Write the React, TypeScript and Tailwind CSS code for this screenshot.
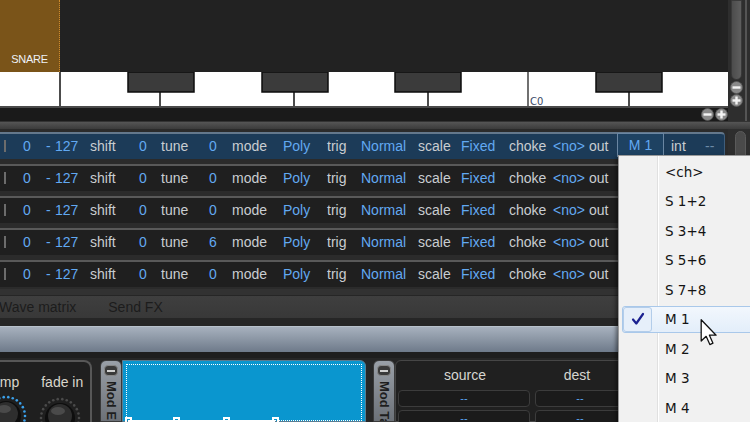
import React from 'react';

const tunes = ['0', '0', '0', '6', '0'];

const LABEL = 'text-[#c9cdd1]';
const VALUE = 'text-[#62a9f2]';

const cells = [
  { t: '0', w: 'w-[23px]', c: VALUE },
  { t: '-', w: 'w-[9px]', c: VALUE },
  { t: '127', w: 'w-[35px]', c: VALUE },
  { t: 'shift', w: 'w-[49px]', c: LABEL },
  { t: '0', w: 'w-[22px]', c: VALUE },
  { t: 'tune', w: 'w-[48px]', c: LABEL },
  { t: 'TUNE', w: 'w-[23px]', c: VALUE },
  { t: 'mode', w: 'w-[51px]', c: LABEL },
  { t: 'Poly', w: 'w-[44px]', c: VALUE },
  { t: 'trig', w: 'w-[34px]', c: LABEL },
  { t: 'Normal', w: 'w-[57px]', c: VALUE },
  { t: 'scale', w: 'w-[43px]', c: LABEL },
  { t: 'Fixed', w: 'w-[48px]', c: VALUE },
  { t: 'choke', w: 'w-[44px]', c: LABEL },
  { t: '<no>', w: 'w-[36px]', c: VALUE },
  { t: 'out', w: 'w-[28px]', c: LABEL },
];

const menu = ['<ch>', 'S 1+2', 'S 3+4', 'S 5+6', 'S 7+8', 'M 1', 'M 2', 'M 3', 'M 4'];

function Keyboard() {
  const blacks = [128, 262, 395, 596];
  const shortLines = [160, 294, 428, 629];
  return (
    <svg width="728" height="34" viewBox="0 0 728 34" className="block">
      <rect x="0" y="0" width="728" height="34" fill="#ffffff" />
      <line x1="60" y1="0" x2="60" y2="34" stroke="#111" strokeWidth="1.5" />
      <line x1="528" y1="0" x2="528" y2="34" stroke="#111" strokeWidth="1.2" />
      {shortLines.map((x) => (
        <line key={x} x1={x} y1="20" x2={x} y2="34" stroke="#111" strokeWidth="1.5" />
      ))}
      {blacks.map((x) => (
        <rect key={x} x={x} y="0" width="66" height="20" fill="#3b3b3b" stroke="#0c0c0c" strokeWidth="1.5" />
      ))}
      <text x="530" y="33" fontSize="10" fill="#3a4a66" fontFamily="'DejaVu Sans', sans-serif">
        C0
      </text>
    </svg>
  );
}

function RoundBtn({ plus }: { plus?: boolean }) {
  return (
    <svg width="13" height="13" viewBox="0 0 13 13" className="block">
      <circle cx="6.5" cy="6.5" r="6" fill="#8a8a8a" stroke="#5a5a5a" strokeWidth="0.8" />
      <rect x="2.5" y="5.3" width="8" height="2.4" fill="#f4f4f4" />
      {plus && <rect x="5.3" y="2.5" width="2.4" height="8" fill="#f4f4f4" />}
    </svg>
  );
}

function Row({ tune, active }: { tune: string; active?: boolean }) {
  return (
    <div className="h-[32px] flex items-center">
      <div
        className={
          active
            ? 'h-[27px] w-[725px] flex items-center bg-[#1c3b58] border-t-2 border-[#64788c] border-r border-r-[#3f5e7c] rounded-tr-sm'
            : 'h-[27px] w-[725px] flex items-center bg-[#1f1f1f] border-t-2 border-[#595959] border-r border-r-[#444]'
        }
      >
        <span className="w-[23px] pl-[4px] flex items-center shrink-0">
          <span className="block w-[2px] h-[12px] bg-[#6c6c6c]" />
        </span>
        {cells.map((c, i) => (
          <span key={i} className={`${c.w} ${c.c} shrink-0`}>
            {c.t === 'TUNE' ? tune : c.t}
          </span>
        ))}
        {active && (
          <>
            <span className="w-[47px] h-[24px] -mt-[2px] flex items-center justify-center border border-[#6a86a2] bg-[#1e4262] text-[#62a9f2] shrink-0">
              M 1
            </span>
            <span className={`w-[34px] ml-[7px] ${LABEL}`}>int</span>
            <span className="text-[#6d8aa6]">--</span>
          </>
        )}
      </div>
    </div>
  );
}

function Knob({ blue }: { blue?: boolean }) {
  const dots = Array.from({ length: 26 }, (_, i) => i);
  return (
    <svg width="44" height="44" viewBox="0 0 44 44" className="block">
      {dots.map((i) => {
        const a = (Math.PI * 2 * i) / 26;
        return (
          <circle
            key={i}
            cx={22 + Math.cos(a) * 19}
            cy={22 + Math.sin(a) * 19}
            r="1.3"
            fill={blue ? '#3aa0ea' : '#4a4a4a'}
          />
        );
      })}
      <circle cx="22" cy="22" r="15" fill="#0e0e0e" />
      <circle cx="22" cy="20" r="12" fill="#2e2e2e" />
      <ellipse cx="20" cy="15" rx="7" ry="4" fill="#4a4a4a" />
    </svg>
  );
}

function SideStrip({ label }: { label: string }) {
  return (
    <div className="w-[22px] h-full rounded-t-md bg-gradient-to-b from-[#9aa0a8] to-[#6c7178] border border-[#3a3a3a] flex flex-col items-center pt-[4px] overflow-hidden">
      <div className="w-[14px] h-[11px] shrink-0 rounded-sm bg-[#3a3a3a] border border-[#888] flex items-center justify-center">
        <div className="w-[8px] h-[2px] bg-[#cfcfcf]" />
      </div>
      <div className="mt-[5px] [writing-mode:vertical-rl] whitespace-nowrap text-[13px] font-bold text-[#1e1e1e] leading-none">
        {label}
      </div>
    </div>
  );
}

export default function App() {
  return (
    <div
      className="relative w-[750px] h-[422px] overflow-hidden bg-[#2a2a2a] text-[14px]"
      style={{ fontFamily: "'Liberation Sans', Arial, sans-serif" }}
    >
      {/* top: pattern + keyboard */}
      <div className="flex h-[121px]">
        <div className="w-[728px] flex flex-col">
          <div className="h-[72px] flex">
            <div className="w-[60px] bg-[#7a5419] border-r border-dotted border-[#d08a2a] flex items-end pb-[5px] justify-center">
              <span className="text-[11px] text-[#eef2f8] tracking-tight">SNARE</span>
            </div>
            <div className="flex-1 bg-[#222222]" />
          </div>
          <Keyboard />
          <div className="h-[2px] bg-[#4a4a4a]" />
          <div className="flex-1 flex items-center bg-[#1a1a1a]">
            <div className="flex-1" />
            <div className="flex gap-[1px]">
              <RoundBtn />
              <RoundBtn plus />
            </div>
          </div>
        </div>
        <div className="w-[22px] bg-[#2e2e2e] flex">
          <div className="w-[17px] flex flex-col items-center">
            <div className="w-[11px] h-[80px] shrink-0 rounded-b-md bg-gradient-to-r from-[#4c4c4c] to-[#5e5e5e] border border-[#3a3a3a]" />
            <div className="mt-[1px]">
              <RoundBtn />
              <RoundBtn plus />
            </div>
          </div>
          <div className="w-[2px] h-[121px] bg-[#555]" />
        </div>
      </div>

      <div className="h-[8px] bg-gradient-to-b from-[#555] to-[#3c3c3c] border-t border-[#333]" />

      {/* zone rows */}
      <div className="flex h-[160px]">
        <div className="w-[728px] bg-[#2b2b2b]">
          {tunes.map((t, i) => (
            <Row key={i} tune={t} active={i === 0} />
          ))}
        </div>
        <div className="w-[22px] bg-[#2e2e2e] pl-[7px] pt-[2px]">
          <div className="w-[11px] h-[60px] rounded-md bg-[#4a4a4a] border border-[#5a5a5a]" />
        </div>
      </div>

      <div className="h-[7px] bg-[#323232] border-b border-[#262626]" />

      {/* tabs */}
      <div className="h-[22px] flex items-center bg-gradient-to-b from-[#3f3f3f] to-[#383838] text-[#1c1c1c]">
        <span className="-ml-[1px]">Wave matrix</span>
        <span className="ml-[32px]">Send FX</span>
      </div>
      <div className="h-[8px] bg-[#262626]" />
      <div className="h-[26px] bg-gradient-to-b from-[#a7b1be] via-[#8b96a4] to-[#6e7a8a] border-t border-[#b8c2cc]" />
      <div className="h-[6px] bg-[#1e1e1e]" />

      {/* bottom panels */}
      <div className="flex h-[64px] bg-[#262626]">
        <div className="w-[92px] mt-[2px] h-full bg-[#1f1f1f] border-2 border-l-0 border-[#575757] rounded-tr-lg relative overflow-hidden">
          <div className="flex text-[#d9d6cc] text-[14px] pt-[10px] whitespace-nowrap">
            <span className="-ml-[8px]">amp</span>
            <span className="ml-[22px]">fade in</span>
          </div>
          <div className="flex -ml-[16px] mt-[1px]">
            <Knob blue />
            <div className="ml-[10px] mt-[2px]">
              <Knob />
            </div>
          </div>
        </div>
        <div className="w-[8px]" />
        <div className="flex h-full pt-[2px]">
          <SideStrip label="Mod Env" />
          <div className="w-[244px] h-full bg-[#0a96cf] border border-[#5a7c90] rounded-tr-md relative">
            <div className="absolute left-[3px] right-[3px] top-[3px] border-t border-dotted border-white" />
            <div className="absolute left-[3px] top-[3px] bottom-0 border-l border-dotted border-white" />
            <div className="absolute right-[3px] top-[3px] bottom-0 border-r border-dotted border-white" />
            <div className="absolute left-[5px] w-[147px] top-[59px] h-[2px] bg-white" />
            <div className="absolute left-[152px] right-[3px] top-[59px] border-t border-dotted border-white" />
            <div className="absolute left-[2px] top-[56px] w-[7px] h-[7px] border-2 border-white" />
            <div className="absolute left-[50px] top-[56px] w-[7px] h-[7px] border-2 border-white" />
            <div className="absolute left-[100px] top-[56px] w-[7px] h-[7px] border-2 border-white" />
            <div className="absolute left-[149px] top-[56px] w-[7px] h-[7px] border-2 border-white" />
          </div>
        </div>
        <div className="w-[7px]" />
        <div className="flex h-full pt-[2px]">
          <SideStrip label="Mod Table" />
          <div className="w-[232px] h-full bg-[#202020] border border-[#464646] rounded-tl-md pl-[2px]">
            <div className="flex text-[#d6d6d0] text-[14px] h-[29px] items-center">
              <span className="w-[134px] text-center">source</span>
              <span className="w-[90px] text-center">dest</span>
            </div>
            <div className="flex gap-[5px] text-[#5aa6f2] text-[11px] leading-none">
              <div className="w-[132px] h-[17px] bg-[#1b1b1b] border border-[#3c3c3c] rounded-sm flex items-center justify-center">--</div>
              <div className="w-[90px] h-[17px] bg-[#1b1b1b] border border-[#3c3c3c] rounded-sm flex items-center justify-center">--</div>
            </div>
            <div className="flex gap-[5px] mt-[3px] text-[#5aa6f2] text-[11px] leading-none">
              <div className="w-[132px] h-[17px] bg-[#1b1b1b] border border-[#3c3c3c] rounded-sm flex items-center justify-center">--</div>
              <div className="w-[90px] h-[17px] bg-[#1b1b1b] border border-[#3c3c3c] rounded-sm flex items-center justify-center">--</div>
            </div>
          </div>
        </div>
      </div>

      {/* output dropdown */}
      <div
        className="absolute left-[618px] top-[155px] w-[140px] h-[280px] bg-[#f1f1f1] border border-[#9a9a9a] shadow-[-2px_2px_4px_rgba(0,0,0,0.45)] pt-[1px]"
        style={{ fontFamily: "'DejaVu Sans', Tahoma, sans-serif" }}
      >
        <div className="absolute left-[38px] top-0 bottom-0 w-[2px] border-l border-[#e0e0e0] bg-white" />
        {menu.map((m) => {
          const on = m === 'M 1';
          return (
            <div key={m} className="relative h-[29.5px] flex items-center">
              {on && (
                <div className="absolute left-[3px] right-0 top-[1px] bottom-[1px] rounded-[3px] border border-[#a9c8ea] bg-gradient-to-b from-[#f2f7fd] to-[#e3eefa] flex">
                  <div className="w-[29px] h-full rounded-[3px] border border-[#b3cdea] bg-[#e6effa] flex items-center justify-center">
                    <svg width="14" height="14" viewBox="0 0 14 14">
                      <path d="M2 7.5 L5.3 11.5 L12 2" fill="none" stroke="#1b2190" strokeWidth="2.2" strokeLinecap="round" strokeLinejoin="round" />
                    </svg>
                  </div>
                </div>
              )}
              <span className="relative ml-[46px] text-[13.5px] text-[#141414]">{m}</span>
            </div>
          );
        })}
      </div>

      {/* mouse cursor */}
      <svg className="absolute left-[700px] top-[319px]" width="18" height="27" viewBox="0 0 12 19">
        <path d="M0.5 0.5 L0.5 15.5 L4 12.2 L6.6 18 L8.8 17 L6.3 11.4 L11 11.4 Z" fill="#ffffff" stroke="#111" strokeWidth="0.9" strokeLinejoin="round" />
      </svg>
    </div>
  );
}
